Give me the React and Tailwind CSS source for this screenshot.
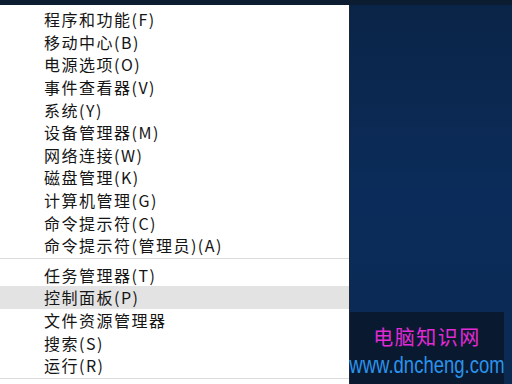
const groups = [
  [
    "程序和功能(F)",
    "移动中心(B)",
    "电源选项(O)",
    "事件查看器(V)",
    "系统(Y)",
    "设备管理器(M)",
    "网络连接(W)",
    "磁盘管理(K)",
    "计算机管理(G)",
    "命令提示符(C)",
    "命令提示符(管理员)(A)",
  ],
  ["任务管理器(T)", "控制面板(P)", "文件资源管理器", "搜索(S)", "运行(R)"],
]

export default function App() {
  return (
    <div className="w-[512px] h-[384px] overflow-hidden bg-[#0b2b58] flex flex-col relative">
      <div className="h-[5px] bg-[#0c1c31] shrink-0" />
      <div className="flex flex-1">
        <div
          className="w-[350px] bg-white border-r border-[#1c2733] pt-[3px] text-[16px] tracking-[1.5px] text-[#151515]"
          style={{ fontFamily: '"Noto Sans CJK SC", "Noto Sans", sans-serif' }}
        >
          {groups.map((items, gi) => (
            <div key={gi} className="border-b border-[#dcdcdc] pb-[1px] mb-[5px] last:mb-0">
              {items.map((label) => (
                <div
                  key={label}
                  className={`h-[22.6px] flex items-center pl-[44px] leading-none ${
                    label === "控制面板(P)" ? "bg-[#e3e3e3]" : ""
                  }`}
                >
                  {label}
                </div>
              ))}
            </div>
          ))}
        </div>
        <div className="flex-1 bg-gradient-to-b from-[#0a2447] via-[#0b2c5a] to-[#0a2a52]" />
      </div>

      <div className="absolute left-[350px] top-[312px] w-[154px] h-[72px] bg-[#091a30] flex flex-col items-center">
        <div
          className="text-[20px] leading-none mt-[15px] text-[#e22ad6] tracking-[1.5px] whitespace-nowrap"
          style={{ fontFamily: '"Noto Sans CJK SC", sans-serif' }}
        >
          电脑知识网
        </div>
        <div
          className="text-[18.5px] leading-none mt-[9px] text-[#2b93ec] scale-y-[1.3] whitespace-nowrap"
          style={{ fontFamily: '"Liberation Sans", sans-serif' }}
        >
          www.dncheng.com
        </div>
      </div>
    </div>
  )
}
